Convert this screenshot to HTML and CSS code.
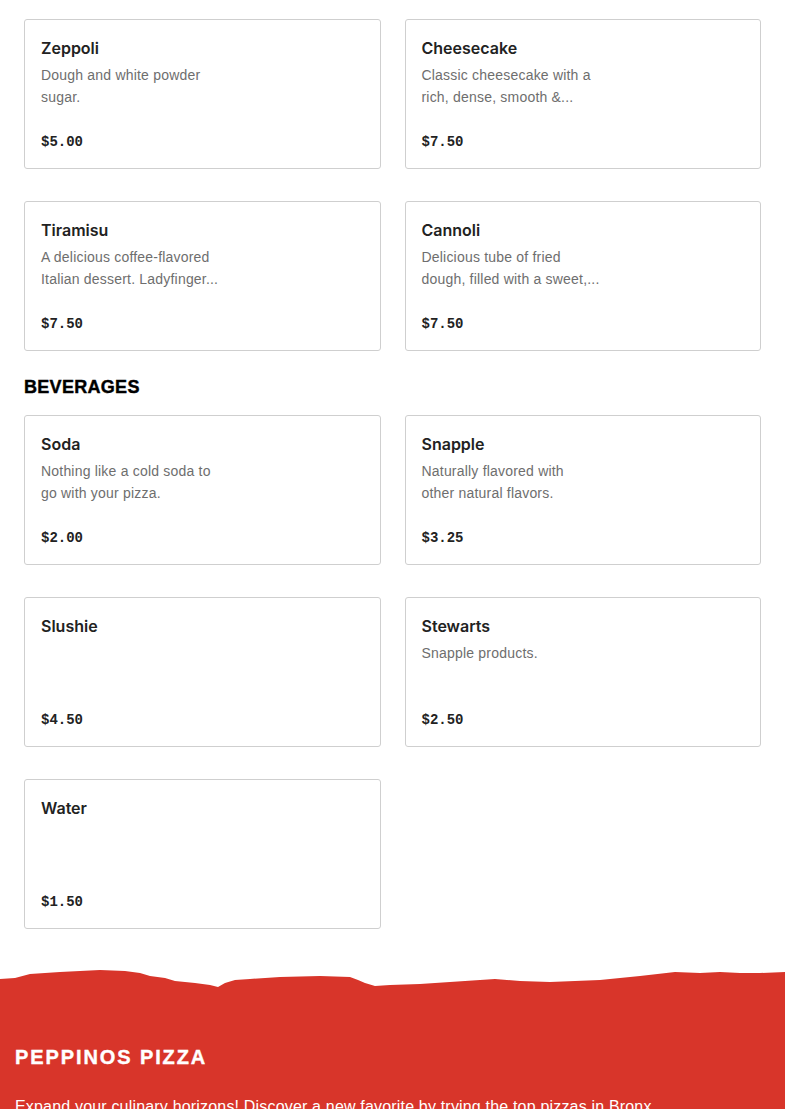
FILE: index.html
```html
<!DOCTYPE html>
<html lang="en">
<head>
<meta charset="utf-8">
<title>Peppinos Pizza Menu</title>
<link rel="stylesheet" href="styles.css">
</head>
<body>
<main class="menu">
  <section class="section">
    <div class="grid">
      <div class="card"><div class="card-title">Zeppoli</div><p class="card-desc">Dough and white powder sugar.</p><div class="card-price">$5.00</div></div>
      <div class="card"><div class="card-title">Cheesecake</div><p class="card-desc">Classic cheesecake with a rich, dense, smooth &amp;...</p><div class="card-price">$7.50</div></div>
      <div class="card"><div class="card-title">Tiramisu</div><p class="card-desc">A delicious coffee-flavored Italian dessert. Ladyfinger...</p><div class="card-price">$7.50</div></div>
      <div class="card"><div class="card-title">Cannoli</div><p class="card-desc">Delicious tube of fried dough, filled with a sweet,...</p><div class="card-price">$7.50</div></div>
    </div>
  </section>
  <section class="section">
    <h2 class="section-title">BEVERAGES</h2>
    <div class="grid">
      <div class="card"><div class="card-title">Soda</div><p class="card-desc">Nothing like a cold soda to go with your pizza.</p><div class="card-price">$2.00</div></div>
      <div class="card"><div class="card-title">Snapple</div><p class="card-desc">Naturally flavored with other&nbsp;natural flavors.</p><div class="card-price">$3.25</div></div>
      <div class="card"><div class="card-title">Slushie</div><p class="card-desc"></p><div class="card-price">$4.50</div></div>
      <div class="card"><div class="card-title">Stewarts</div><p class="card-desc">Snapple products.</p><div class="card-price">$2.50</div></div>
      <div class="card"><div class="card-title">Water</div><p class="card-desc"></p><div class="card-price">$1.50</div></div>
    </div>
  </section>
</main>
<footer class="footer">
  <svg class="torn" viewBox="0 0 785 22" preserveAspectRatio="none" aria-hidden="true">
    <path fill="#d8352a" d="M0 12 L15 11 L30 7 L60 5 L100 3 L125 4 L140 6 L150 9 L165 11 L175 14 L195 16 L210 18 L218 20 L225 16 L235 13 L250 12 L280 10 L320 9 L350 10 L358 13 L365 16 L375 19 L390 18 L420 17 L450 15 L495 12 L520 14 L550 15 L600 13 L640 9 L675 5 L700 6 L720 5 L740 6 L760 6 L785 5 L785 22 L0 22 Z"/>
  </svg>
  <div class="footer-body">
    <h2 class="footer-title">PEPPINOS PIZZA</h2>
    <p class="footer-text">Expand your culinary horizons! Discover a new favorite by trying the top pizzas in Bronx.</p>
  </div>
</footer>
</body>
</html>
```

FILE: styles.css
```css
* { box-sizing: border-box; }
html, body { margin: 0; padding: 0; background: #fff; }
body { font-family: "Liberation Sans", Arial, sans-serif; color: #222; }

.menu { padding: 19px 24px 38px; display: flex; flex-direction: column; gap: 24px; }
.section { display: flex; flex-direction: column; gap: 16px; }
.section-title {
  margin: 0;
  font-family: "Liberation Sans", Arial, sans-serif;
  font-weight: 900;
  font-size: 18px;
  line-height: 24px;
  letter-spacing: 0.3px;
  color: #000;
  -webkit-text-stroke: 0.4px #000;
}
.grid { display: grid; grid-template-columns: 1fr 1fr; column-gap: 24px; row-gap: 32px; }
.card {
  height: 150px;
  border: 1px solid #cfcfcf;
  border-radius: 3px;
  padding: 16px 16px 15px 16px;
  display: flex;
  flex-direction: column;
}
.card-title { font-size: 16px; line-height: 24px; font-weight: 600; color: #222; font-family: Inter, "Liberation Sans", sans-serif; }
.card-desc {
  margin: 4px 0 0;
  max-width: 181px;
  font-size: 14px;
  line-height: 22px;
  letter-spacing: 0.2px;
  color: #6e6e6e;
  min-height: 44px;
}
.card-price {
  margin-top: auto;
  font-family: "Liberation Mono", "Courier New", monospace;
  font-weight: 700;
  font-size: 14px;
  line-height: 22px;
  color: #222;
}

.footer { display: flex; flex-direction: column; }
.torn { display: block; width: 100%; height: 22px; margin-bottom: -2px; }
.footer-body { background: #d8352a; padding: 56px 15px 20px; color: #fff; }
.footer-title {
  margin: 0;
  font-family: "Liberation Sans", Arial, sans-serif;
  font-weight: 700;
  font-size: 20px;
  line-height: 28px;
  letter-spacing: 1.9px;
  -webkit-text-stroke: 0.4px #fff;
}
.footer-text { margin: 24px 0 0; font-size: 16px; line-height: 24px; letter-spacing: 0.18px; }
```
